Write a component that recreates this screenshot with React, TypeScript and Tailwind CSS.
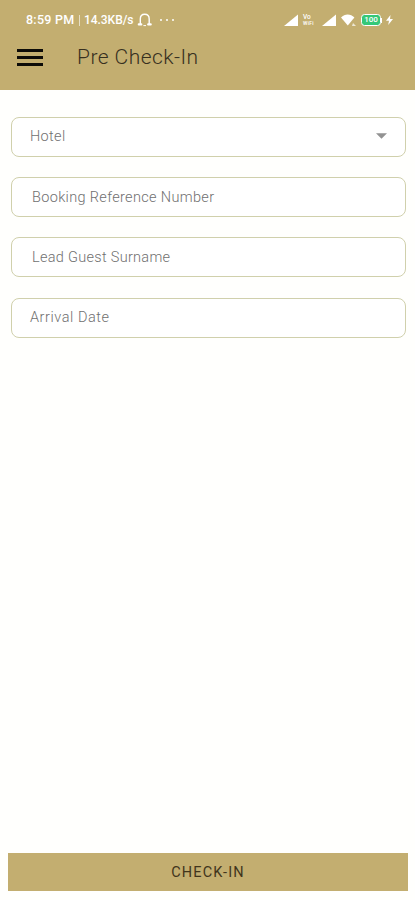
import React from 'react';

const SignalIcon = () => (
    <svg width="14" height="12" viewBox="0 0 14 12">
        <path d="M0 12L14 0.5V12Z" fill="#fff" />
    </svg>
);

const StatusBar = () => (
    <div className="flex h-10 items-center justify-between pl-[26px] pr-[22px] text-white">
        <div className="flex items-center whitespace-nowrap">
            <span className="w-[50px] text-[12.5px] font-medium tracking-[0.25px]">8:59 PM</span>
            <span className="ml-[3px] h-[11px] w-px bg-white/60" />
            <span className="ml-[4px] w-[51px] text-[12px] font-medium tracking-[-0.05px]">14.3KB/s</span>
            {/* Headset */}
            <svg className="ml-[2px]" width="16" height="14" viewBox="0 0 16 14" fill="none" stroke="#fff" strokeWidth="1.4" strokeLinecap="round">
                <path d="M3.3 11V6C3.3 3 5.1 1.2 7.7 1.2S12.2 3 12.2 6V11" />
                <path d="M1.8 11.4H4.3M11.2 11.4H13.7" strokeWidth="2.2" />
                <path d="M6.8 12.6H8.6" strokeWidth="1" />
            </svg>
            <span className="ml-[7px] flex gap-[4px]">
                <span className="size-[2px] rounded-full bg-white" />
                <span className="size-[2px] rounded-full bg-white" />
                <span className="size-[2px] rounded-full bg-white" />
            </span>
        </div>

        <div className="flex items-center">
            <SignalIcon />
            <span className="ml-[5px] mr-[5px] flex w-[14px] flex-col whitespace-nowrap text-[6.5px] font-medium leading-[8px]">
                <span className="h-[6px] leading-[6px]">Vo</span>
                <span className="text-[5px] leading-[6px] tracking-[0.3px]">WiFi</span>
            </span>
            <SignalIcon />
            <svg className="ml-[5px]" width="15" height="12" viewBox="0 0 15 12" fill="#fff">
                <path d="M0 3.5C3.8-0.4 9.6-0.4 13.4 3.5L6.8 11.5Z" />
                <path d="M12 9L15 12H11Z" opacity="0.7" />
            </svg>
            <span className="ml-[5px] flex h-[12px] w-[20px] items-center justify-center rounded-[3.5px] border-[1.5px] border-white bg-[#35c878] text-[8px] font-medium leading-none">
                100
            </span>
            <span className="h-[5px] w-px bg-white" />
            <svg className="ml-[4px]" width="7" height="10" viewBox="0 0 7 10" fill="#fff">
                <path d="M4.5 0L0 5.8H3L2.2 10L7 4H4Z" />
            </svg>
        </div>
    </div>
);

const fields = [
    { label: 'Hotel', style: 'pl-[18px]', text: 'tracking-[0.35px]', dropdown: true },
    { label: 'Booking Reference Number', style: 'pl-[20px]', text: 'pt-px tracking-[0.34px]' },
    { label: 'Lead Guest Surname', style: 'pl-[20px]', text: 'pt-px tracking-[0.3px]' },
    { label: 'Arrival Date', style: 'pl-[18px]', text: 'tracking-[0.55px]' }
];

const App = () => {
    return (
        <div className="flex h-[900px] w-[415px] flex-col overflow-hidden bg-[#fffffd] font-['Roboto',sans-serif]">
            <header className="h-[90px] shrink-0 bg-[#c3ae70]">
                <StatusBar />
                <div className="flex h-[35px] items-center pl-[17px]">
                    <button className="flex w-[26px] flex-col gap-[4px]" aria-label="Menu">
                        <span className="h-[3px] w-full bg-[#0d0c08]" />
                        <span className="h-[3px] w-full bg-[#0d0c08]" />
                        <span className="h-[3px] w-full bg-[#0d0c08]" />
                    </button>
                    <h1 className="ml-[34px] whitespace-nowrap pt-px text-[21px] font-light tracking-[0.45px] text-[#37301f]">Pre Check-In</h1>
                </div>
            </header>

            <main className="flex grow flex-col gap-[20.4px] pl-[11px] pr-[9px] pt-[26.5px]">
                {fields.map((field) => (
                    <div
                        key={field.label}
                        className={`flex h-[40px] items-center justify-between rounded-[8px] border border-[#d0d0ac] bg-white pr-[18px] ${field.style}`}
                    >
                        <span className={`whitespace-nowrap text-[14.5px] font-light text-[#707070] ${field.text}`}>{field.label}</span>
                        {field.dropdown && (
                            <svg className="-mt-[2px]" width="11" height="6" viewBox="0 0 11 6">
                                <path d="M0 0.3H11L5.5 5.8Z" fill="#929292" />
                            </svg>
                        )}
                    </div>
                ))}
            </main>

            <button className="ml-[8px] mr-[7px] mb-[9px] flex h-[38px] shrink-0 items-center justify-center bg-[#c3ae70] pt-[2px] text-[14.5px] tracking-[1.15px] text-[#41351c]">
                CHECK-IN
            </button>
        </div>
    );
};

export default App;
